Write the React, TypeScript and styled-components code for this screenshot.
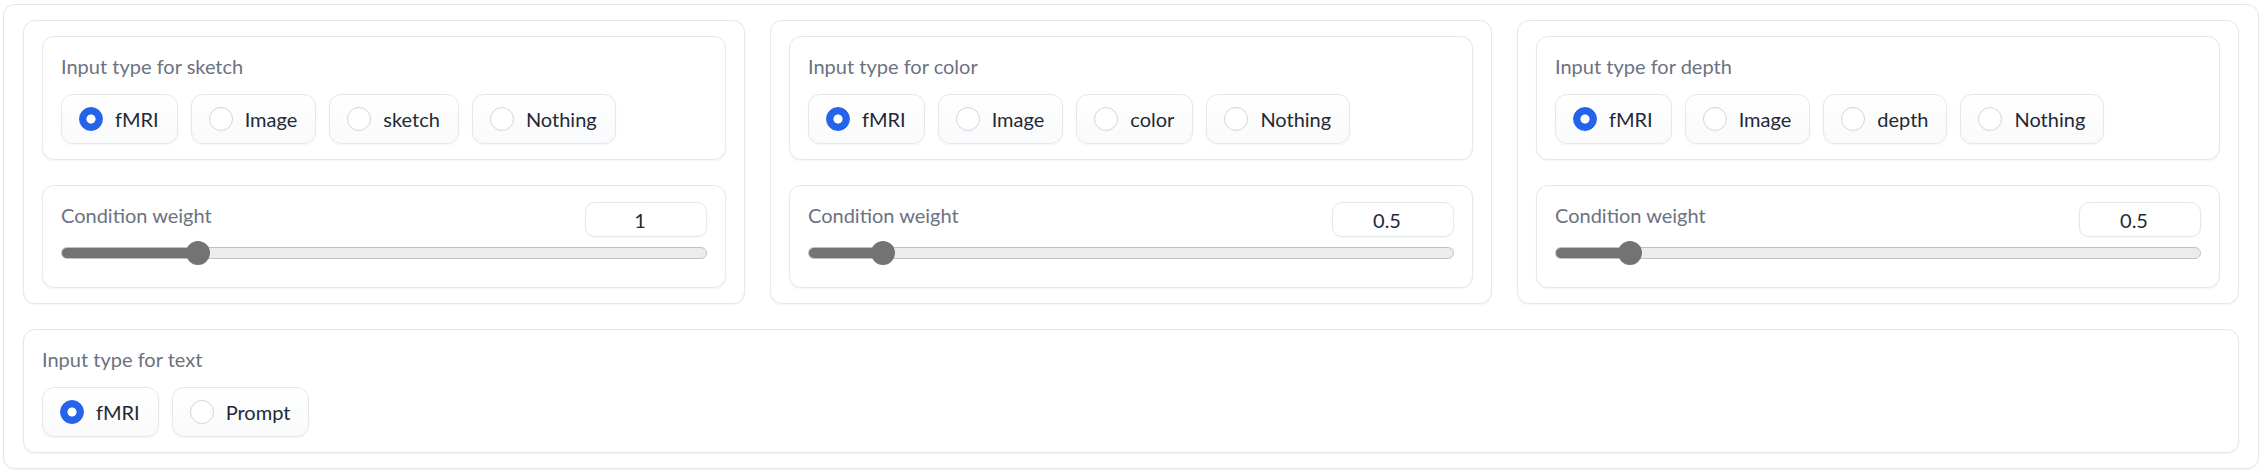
import React, { useState } from "react";
import styled, { createGlobalStyle } from "styled-components";

const GlobalStyle = createGlobalStyle`
  html, body {
    margin: 0;
    padding: 0;
    background: #ffffff;
  }
  body {
    font-family: Lato, "Noto Sans", "Liberation Sans", sans-serif;
    -webkit-font-smoothing: antialiased;
  }
  * { box-sizing: border-box; }
`;

const Page = styled.div`
  margin: 4px 3px 6px 3px;
  padding: 15px 19px;
  border: 1px solid #e5e7eb;
  border-radius: 12px;
  background: #ffffff;
  box-shadow: 0 1px 2px rgba(0, 0, 0, 0.05);
  display: flex;
  flex-direction: column;
  gap: 25px;
`;

const Row = styled.div`
  display: grid;
  grid-template-columns: repeat(3, minmax(0, 1fr));
  gap: 25px;
`;

const Group = styled.div`
  padding: 15px 18px;
  border: 1px solid #e5e7eb;
  border-radius: 12px;
  background: #ffffff;
  box-shadow: 0 1px 2px rgba(0, 0, 0, 0.05);
  display: flex;
  flex-direction: column;
  gap: 25px;
`;

const Block = styled.div`
  padding: 15px 18px;
  border: 1px solid #e5e7eb;
  border-radius: 12px;
  background: #ffffff;
  box-shadow: 0 1px 2px rgba(0, 0, 0, 0.05);
`;

const BlockLabel = styled.span`
  display: block;
  font-size: 20px;
  line-height: 28px;
  color: #6b7280;
`;

const Options = styled.div`
  margin-top: 14px;
  display: flex;
  flex-wrap: wrap;
  gap: 13px;
`;

const Option = styled.label`
  display: flex;
  align-items: center;
  gap: 12px;
  height: 50px;
  padding: 0 18px 0 17px;
  border: 1px solid #e5e7eb;
  border-radius: 12px;
  background: linear-gradient(to top, #f9fafb, #ffffff);
  box-shadow: 0 1px 2px rgba(0, 0, 0, 0.05);
  font-size: 20px;
  line-height: 28px;
  color: #1f2937;
  cursor: pointer;
`;

const RadioInput = styled.input`
  appearance: none;
  -webkit-appearance: none;
  margin: 0;
  width: 24px;
  height: 24px;
  flex: none;
  border-radius: 50%;
  border: 1px solid #d1d5db;
  background: #ffffff;
  &:checked {
    border-color: #2563eb;
    background: radial-gradient(circle, #ffffff 0 4.2px, #2563eb 4.9px);
  }
`;

const SliderHeader = styled.div`
  display: flex;
  align-items: flex-start;
  justify-content: space-between;
  height: 36px;
`;

const NumberBox = styled.input`
  width: 122px;
  height: 35px;
  margin-top: 1px;
  padding: 0 12px 0 0;
  border: 1px solid #e5e7eb;
  border-radius: 10px;
  background: #ffffff;
  box-shadow: 0 1px 2px rgba(0, 0, 0, 0.04);
  font-family: Lato, "Noto Sans", sans-serif;
  font-size: 20px;
  color: #1f2937;
  text-align: center;
  outline: none;
  -moz-appearance: textfield;
  &::-webkit-inner-spin-button,
  &::-webkit-outer-spin-button {
    -webkit-appearance: none;
    margin: 0;
  }
`;

const Range = styled.input<{ $frac: number }>`
  display: block;
  width: 100%;
  height: 12px;
  margin: 10px 0 13px 0;
  padding: 0;
  -webkit-appearance: none;
  appearance: none;
  border: 1px solid #c2c2c2;
  border-radius: 6px;
  background: linear-gradient(
    to right,
    #737373 0 calc(12px + (100% - 24px) * ${(p) => p.$frac}),
    #ececec 0
  );
  outline: none;
  &::-webkit-slider-thumb {
    -webkit-appearance: none;
    appearance: none;
    width: 24px;
    height: 24px;
    border: none;
    border-radius: 50%;
    background: #737373;
    cursor: pointer;
  }
  &::-moz-range-thumb {
    width: 24px;
    height: 24px;
    border: none;
    border-radius: 50%;
    background: #737373;
  }
`;

type RadioBlockProps = { title: string; name: string; options: string[] };

function RadioBlock({ title, name, options }: RadioBlockProps) {
  const [selected, setSelected] = useState(options[0]);
  return (
    <Block>
      <BlockLabel>{title}</BlockLabel>
      <Options>
        {options.map((o) => (
          <Option key={o}>
            <RadioInput
              type="radio"
              name={name}
              checked={selected === o}
              onChange={() => setSelected(o)}
            />
            <span>{o}</span>
          </Option>
        ))}
      </Options>
    </Block>
  );
}

function SliderBlock({ initial }: { initial: number }) {
  const [value, setValue] = useState(initial);
  const min = 0;
  const max = 5;
  return (
    <Block>
      <SliderHeader>
        <BlockLabel>Condition weight</BlockLabel>
        <NumberBox
          type="number"
          min={min}
          max={max}
          step={0.1}
          value={value}
          onChange={(e) => setValue(Number(e.target.value))}
        />
      </SliderHeader>
      <Range
        type="range"
        min={min}
        max={max}
        step={0.1}
        value={value}
        $frac={(value - min) / (max - min)}
        onChange={(e) => setValue(Number(e.target.value))}
      />
    </Block>
  );
}

const conditions = [
  { key: "sketch", weight: 1 },
  { key: "color", weight: 0.5 },
  { key: "depth", weight: 0.5 },
];

export default function App() {
  return (
    <>
      <GlobalStyle />
      <Page>
        <Row>
          {conditions.map((c) => (
            <Group key={c.key}>
              <RadioBlock
                title={`Input type for ${c.key}`}
                name={`input-${c.key}`}
                options={["fMRI", "Image", c.key, "Nothing"]}
              />
              <SliderBlock initial={c.weight} />
            </Group>
          ))}
        </Row>
        <RadioBlock
          title="Input type for text"
          name="input-text"
          options={["fMRI", "Prompt"]}
        />
      </Page>
    </>
  );
}
